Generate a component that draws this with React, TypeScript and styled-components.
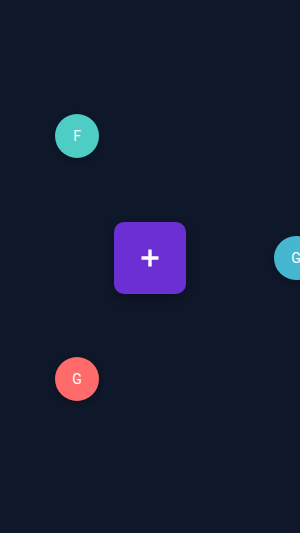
import styled, { createGlobalStyle } from "styled-components";

const GlobalStyle = createGlobalStyle`
  html, body {
    margin: 0;
    padding: 0;
    background: #0f172a;
    overflow: hidden;
  }
  body {
    font-family: Roboto, "Noto Sans", sans-serif;
  }
`;

const Stage = styled.div`
  height: 100vh;
  display: flex;
  justify-content: center;
  align-items: center;
  padding-bottom: 17px;
  box-sizing: border-box;
`;

const Anchor = styled.div`
  position: relative;
  width: 72px;
  height: 72px;
`;

const MainButton = styled.button`
  width: 72px;
  height: 72px;
  border: none;
  border-radius: 10px;
  background: #6c2fd4;
  color: #ffffff;
  display: flex;
  justify-content: center;
  align-items: center;
  box-shadow: 0 4px 12px rgba(0, 0, 0, 0.3);
  cursor: pointer;
  padding: 0;
`;

const Item = styled.div<{ $color: string }>`
  position: absolute;
  left: 50%;
  top: 50%;
  width: 44px;
  height: 44px;
  margin: -22px 0 0 -22px;
  border-radius: 50%;
  background: ${(p) => p.$color};
  color: #ffffff;
  font-size: 14px;
  display: flex;
  justify-content: center;
  align-items: center;
  box-shadow: 0 2px 6px rgba(0, 0, 0, 0.25);
`;

// offsets from the centre of the main button
const items = [
  { label: "F", color: "#4ecdc4", x: -73, y: -122 },
  { label: "G", color: "#45b7d1", x: 146, y: 0 },
  { label: "G", color: "#ff6b6b", x: -73, y: 121 },
];

export default function App() {
  return (
    <>
      <GlobalStyle />
      <Stage>
        <Anchor>
          {items.map((it, i) => (
            <Item
              key={i}
              $color={it.color}
              style={{ transform: `translate(${it.x}px, ${it.y}px)` }}
            >
              {it.label}
            </Item>
          ))}
          <MainButton aria-label="open menu">
            <svg width="18" height="18" viewBox="0 0 18 18">
              <path d="M9 0.5v17M0.5 9h17" stroke="#fff" strokeWidth="3.4" />
            </svg>
          </MainButton>
        </Anchor>
      </Stage>
    </>
  );
}
